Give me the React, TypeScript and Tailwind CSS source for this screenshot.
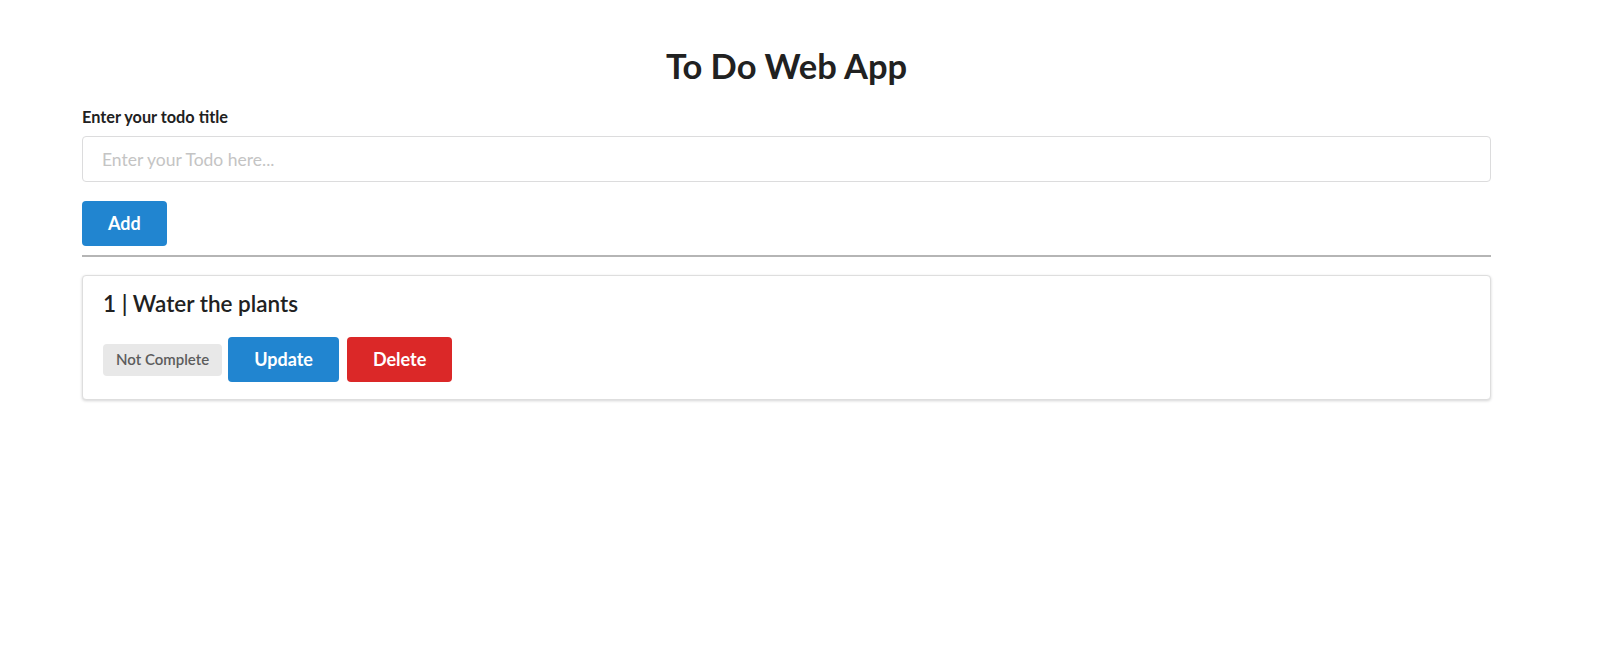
export default function App() {
  const todos = [{ id: 1, title: "Water the plants", completed: false }];

  return (
    <div className="min-h-screen bg-white font-['Lato','Liberation_Sans',sans-serif] text-[#212121]">
      <div className="ml-[82px] w-[1409px] pt-[49px]">
        <h1 className="text-center text-[34.5px] font-bold leading-[34px]">To Do Web App</h1>

        <form className="mt-[25px]" onSubmit={(e) => e.preventDefault()}>
          <label className="block text-[16.3px] font-bold leading-[18px]">Enter your todo title</label>
          <input
            type="text"
            placeholder="Enter your Todo here..."
            className="mt-[10px] block h-[46px] w-full rounded-[4px] border border-[#dcdcdd] px-[19px] text-[17.5px] outline-none placeholder:text-[#c4c4c4]"
          />
          <button
            type="submit"
            className="mt-[19px] h-[45px] rounded-[4px] bg-[#2185d0] px-[26px] text-[18px] font-bold text-white"
          >
            Add
          </button>
        </form>

        <div className="mt-[9px] border-t-2 border-[#b5b5b5]" />

        <div className="mt-[18px] flex flex-col gap-4">
          {todos.map((t) => (
            <div
              key={t.id}
              className="rounded-[4px] border border-[#dedede] bg-white px-[20px] pb-[17px] pt-[15px] shadow-[0_1px_3px_0_#d4d4d5]"
            >
              <div className="text-[22.5px] font-semibold leading-[26px]">
                {t.id} | {t.title}
              </div>
              <div className="mt-[20px] flex items-center">
                <span className="flex h-[32px] items-center rounded-[4px] bg-[#e8e8e8] px-[13px] text-[15px] font-semibold text-[#5c5c5c]">
                  {t.completed ? "Complete" : "Not Complete"}
                </span>
                <button className="ml-[6px] h-[45px] rounded-[4px] bg-[#2185d0] px-[26px] text-[18px] font-bold text-white">
                  Update
                </button>
                <button className="ml-[8px] h-[45px] rounded-[4px] bg-[#db2828] px-[26px] text-[18px] font-bold text-white">
                  Delete
                </button>
              </div>
            </div>
          ))}
        </div>
      </div>
    </div>
  );
}
